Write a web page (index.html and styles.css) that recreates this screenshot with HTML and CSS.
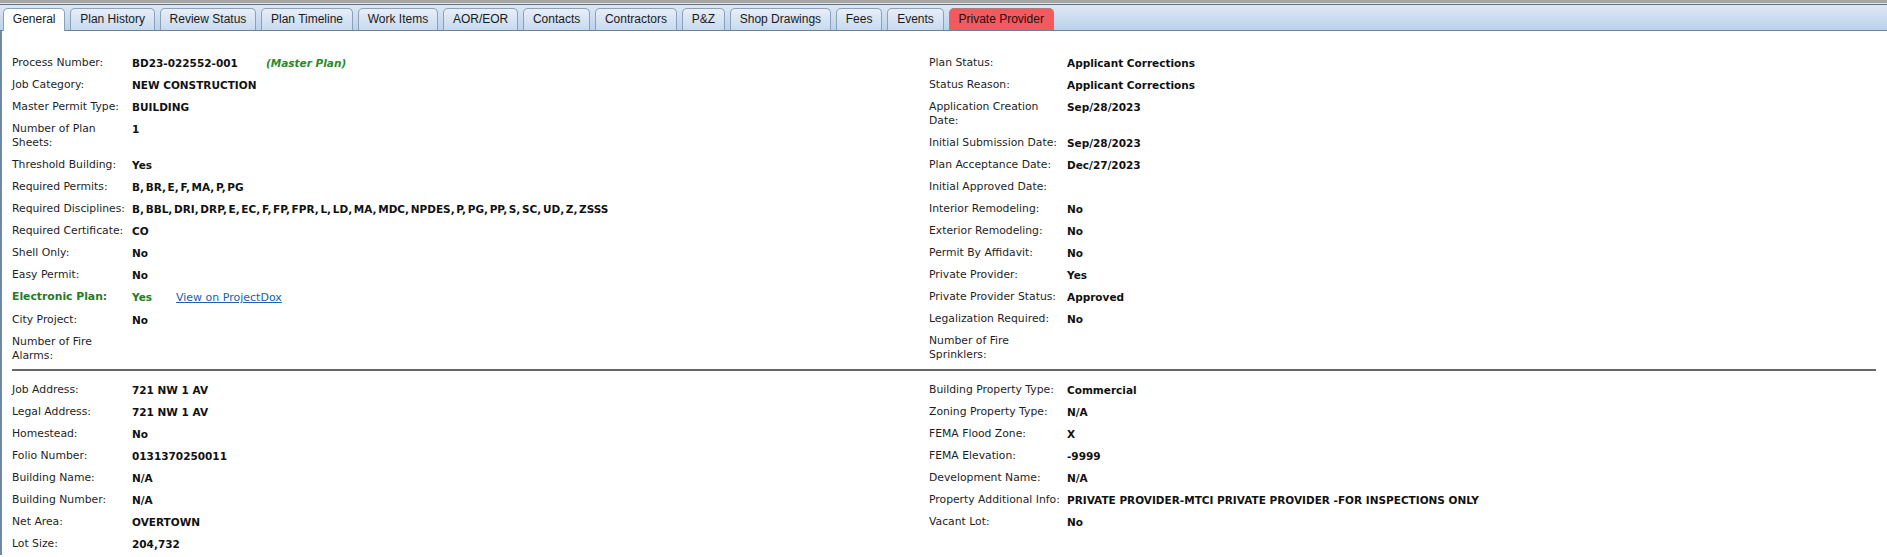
FILE: index.html
```html
<!DOCTYPE html>
<html>
<head>
    <meta charset="utf-8">
    <title>Plan Details - General</title>
    <link rel="stylesheet" href="styles.css">
</head>
<body>

<div class="top-strip"></div>
<ul class="tabs">
    <li class="tab active">General</li>
    <li class="tab">Plan History</li>
    <li class="tab">Review Status</li>
    <li class="tab">Plan Timeline</li>
    <li class="tab">Work Items</li>
    <li class="tab">AOR/EOR</li>
    <li class="tab">Contacts</li>
    <li class="tab">Contractors</li>
    <li class="tab">P&amp;Z</li>
    <li class="tab">Shop Drawings</li>
    <li class="tab">Fees</li>
    <li class="tab">Events</li>
    <li class="tab tab-alert">Private Provider</li>
</ul>

<div class="panel">
    <div class="section">
        <div class="col">
            <div class="row"><span class="lbl">Process Number:</span><span class="val"><span class="val-fixed">BD23-022552-001</span><em class="note">(Master Plan)</em></span></div>
            <div class="row"><span class="lbl">Job Category:</span><span class="val">NEW CONSTRUCTION</span></div>
            <div class="row"><span class="lbl">Master Permit Type:</span><span class="val">BUILDING</span></div>
            <div class="row"><span class="lbl">Number of Plan Sheets:</span><span class="val">1</span></div>
            <div class="row"><span class="lbl">Threshold Building:</span><span class="val">Yes</span></div>
            <div class="row"><span class="lbl">Required Permits:</span><span class="val codes">B, BR, E, F, MA, P, PG</span></div>
            <div class="row"><span class="lbl">Required Disciplines:</span><span class="val codes">B, BBL, DRI, DRP, E, EC, F, FP, FPR, L, LD, MA, MDC, NPDES, P, PG, PP, S, SC, UD, Z, ZSSS</span></div>
            <div class="row"><span class="lbl">Required Certificate:</span><span class="val">CO</span></div>
            <div class="row"><span class="lbl">Shell Only:</span><span class="val">No</span></div>
            <div class="row"><span class="lbl">Easy Permit:</span><span class="val">No</span></div>
            <div class="row green"><span class="lbl">Electronic Plan:</span><span class="val"><span class="val-short">Yes</span><a class="link" href="#">View on ProjectDox</a></span></div>
            <div class="row"><span class="lbl">City Project:</span><span class="val">No</span></div>
            <div class="row"><span class="lbl">Number of Fire Alarms:</span><span class="val"></span></div>
        </div>
        <div class="col col-right">
            <div class="row"><span class="lbl">Plan Status:</span><span class="val">Applicant Corrections</span></div>
            <div class="row"><span class="lbl">Status Reason:</span><span class="val">Applicant Corrections</span></div>
            <div class="row"><span class="lbl">Application Creation Date:</span><span class="val">Sep/28/2023</span></div>
            <div class="row"><span class="lbl">Initial Submission Date:</span><span class="val">Sep/28/2023</span></div>
            <div class="row"><span class="lbl">Plan Acceptance Date:</span><span class="val">Dec/27/2023</span></div>
            <div class="row"><span class="lbl">Initial Approved Date:</span><span class="val"></span></div>
            <div class="row"><span class="lbl">Interior Remodeling:</span><span class="val">No</span></div>
            <div class="row"><span class="lbl">Exterior Remodeling:</span><span class="val">No</span></div>
            <div class="row"><span class="lbl">Permit By Affidavit:</span><span class="val">No</span></div>
            <div class="row"><span class="lbl">Private Provider:</span><span class="val">Yes</span></div>
            <div class="row"><span class="lbl">Private Provider Status:</span><span class="val">Approved</span></div>
            <div class="row"><span class="lbl">Legalization Required:</span><span class="val">No</span></div>
            <div class="row"><span class="lbl">Number of Fire Sprinklers:</span><span class="val"></span></div>
        </div>
    </div>

    <div class="divider"></div>

    <div class="section">
        <div class="col">
            <div class="row"><span class="lbl">Job Address:</span><span class="val">721 NW 1 AV</span></div>
            <div class="row"><span class="lbl">Legal Address:</span><span class="val">721 NW 1 AV</span></div>
            <div class="row"><span class="lbl">Homestead:</span><span class="val">No</span></div>
            <div class="row"><span class="lbl">Folio Number:</span><span class="val">0131370250011</span></div>
            <div class="row"><span class="lbl">Building Name:</span><span class="val">N/A</span></div>
            <div class="row"><span class="lbl">Building Number:</span><span class="val">N/A</span></div>
            <div class="row"><span class="lbl">Net Area:</span><span class="val">OVERTOWN</span></div>
            <div class="row"><span class="lbl">Lot Size:</span><span class="val">204,732</span></div>
        </div>
        <div class="col col-right">
            <div class="row"><span class="lbl">Building Property Type:</span><span class="val">Commercial</span></div>
            <div class="row"><span class="lbl">Zoning Property Type:</span><span class="val">N/A</span></div>
            <div class="row"><span class="lbl">FEMA Flood Zone:</span><span class="val">X</span></div>
            <div class="row"><span class="lbl">FEMA Elevation:</span><span class="val">-9999</span></div>
            <div class="row"><span class="lbl">Development Name:</span><span class="val">N/A</span></div>
            <div class="row"><span class="lbl">Property Additional Info:</span><span class="val">PRIVATE PROVIDER-MTCI PRIVATE PROVIDER -FOR INSPECTIONS ONLY</span></div>
            <div class="row"><span class="lbl">Vacant Lot:</span><span class="val">No</span></div>
        </div>
    </div>
</div>

</body>
</html>
```

FILE: styles.css
```css
html, body {
    margin: 0;
    padding: 0;
    background: #fff;
}

body {
    font-family: "DejaVu Sans", "Noto Sans", sans-serif;
    font-size: 10.8px;
    color: #1e1e1e;
}

/* tab strip */
.top-strip {
    height: 3px;
    background: #a6a6a6;
    border-bottom: 1px solid #e4e4e4;
}

.tabs {
    list-style: none;
    margin: 0;
    padding: 0 0 0 3px;
    height: 25px;
    display: flex;
    align-items: flex-end;
    gap: 5px;
    border-top: 1px solid #5f7389;
    border-bottom: 1px solid #6c8096;
    background: linear-gradient(#dee7f2, #bad2ed);
}

.tab {
    height: 21px;
    line-height: 21px;
    padding: 0 8.85px;
    font-family: "Liberation Sans", Arial, sans-serif;
    font-size: 12px;
    color: #1a1a1a;
    border: 1px solid #8ba1b9;
    border-bottom: none;
    border-radius: 5px 5px 0 0;
    background: linear-gradient(#e7eef7, #c8daef);
    cursor: pointer;
}

.tab.active {
    height: 22px;
    margin-bottom: -1px;
    background: #fff;
}

.tab-alert {
    background: #f15a5f;
    border-color: #b8787b;
    color: #2a0e0e;
}

/* content */
.panel {
    border-left: 2px solid #6f89a5;
    padding: 21px 11px 0 10px;
}

.section {
    display: grid;
    grid-template-columns: 917px 1fr;
}

.row {
    display: flex;
    padding: 4px 0;
    line-height: 14px;
}

.lbl {
    flex: none;
    width: 120px;
}

.col-right .lbl {
    width: 138px;
}

.val {
    font-weight: bold;
    font-size: 10.5px;
    color: #111;
}

.codes {
    word-spacing: -2px;
}

.val-fixed {
    display: inline-block;
    width: 134px;
}

.val-short {
    display: inline-block;
    width: 44px;
}

.note {
    color: #2a8a2a;
}

.green .lbl,
.green .val {
    color: #1f7d1f;
    font-weight: bold;
}

.link {
    color: #245cb0;
    font-weight: normal;
    font-size: 11px;
}

.divider {
    height: 2px;
    background: #666;
    margin: 2px 0 8px;
}
```
